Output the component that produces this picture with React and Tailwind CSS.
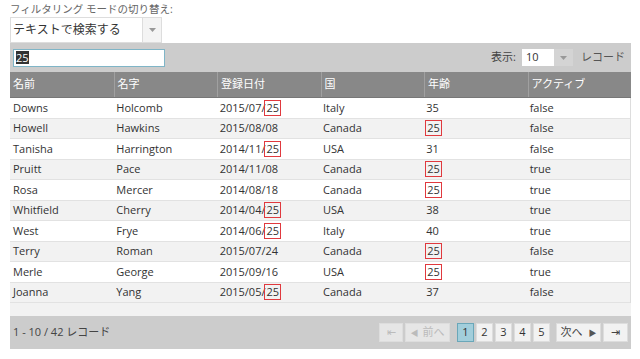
import React from 'react';

const rows = [
  { first: 'Downs', last: 'Holcomb', date: ['2015/07/', '25'], country: 'Italy', age: '35', active: 'false' },
  { first: 'Howell', last: 'Hawkins', date: ['2015/08/08'], country: 'Canada', age: '25', ageHit: true, active: 'false' },
  { first: 'Tanisha', last: 'Harrington', date: ['2014/11/', '25'], country: 'USA', age: '31', active: 'false' },
  { first: 'Pruitt', last: 'Pace', date: ['2014/11/08'], country: 'Canada', age: '25', ageHit: true, active: 'true' },
  { first: 'Rosa', last: 'Mercer', date: ['2014/08/18'], country: 'Canada', age: '25', ageHit: true, active: 'true' },
  { first: 'Whitfield', last: 'Cherry', date: ['2014/04/', '25'], country: 'USA', age: '38', active: 'true' },
  { first: 'West', last: 'Frye', date: ['2014/06/', '25'], country: 'Italy', age: '40', active: 'true' },
  { first: 'Terry', last: 'Roman', date: ['2015/07/24'], country: 'Canada', age: '25', ageHit: true, active: 'false' },
  { first: 'Merle', last: 'George', date: ['2015/09/16'], country: 'USA', age: '25', ageHit: true, active: 'true' },
  { first: 'Joanna', last: 'Yang', date: ['2015/05/', '25'], country: 'Canada', age: '37', active: 'false' },
];

const headers = ['名前', '名字', '登録日付', '国', '年齢', 'アクティブ'];

const Hit = ({ children }) => (
  <span className="border border-[#e0393e] leading-[14px] inline-block px-[1px] -mx-[1px]">{children}</span>
);

const Caret = () => (
  <svg width="7" height="4" viewBox="0 0 7 4"><path d="M0 0h7L3.5 4z" fill="#999" /></svg>
);

export default function App() {
  return (
    <div className="w-[640px] h-[359px] bg-white text-[11px] text-[#333] overflow-hidden" style={{ fontFamily: '"Open Sans", "Noto Sans CJK JP", sans-serif' }}>
      <div className="px-[10px] pt-[3px]">
        <div className="text-[10.5px] text-[#666] leading-[13px] h-[14px]">フィルタリング モードの切り替え:</div>
        <div className="flex w-[152px] h-[26px] border border-[#ddd] bg-white">
          <div className="flex-1 flex items-center pl-[2px] text-[12px] text-[#333]">テキストで検索する</div>
          <div className="w-[19px] border-l border-[#ddd] bg-[#f4f4f4] flex items-center justify-center"><Caret /></div>
        </div>

        <div className="w-[621px]">
          <div className="h-[29px] bg-[#cccccc] flex items-center justify-between pl-[3px] pr-[6px]">
            <div className="w-[152px] h-[18px] bg-white border border-[#7fb5c7] flex items-center px-[2px]">
              <span className="bg-[#333] text-white text-[11px] leading-[13px]">25</span>
            </div>
            <div className="flex items-center gap-[5px]">
              <span className="text-[#444]">表示:</span>
              <div className="flex h-[19px] w-[53px] border border-[#ccc]">
                <div className="flex-1 bg-white flex items-center pl-[4px] text-[11px]">10</div>
                <div className="w-[19px] bg-[#d4d4d4] flex items-center justify-center"><Caret /></div>
              </div>
              <span className="text-[11px] text-[#555] ml-[2px]">レコード</span>
            </div>
          </div>

          <div className="grid grid-cols-6 h-[26px] bg-[#888888] text-white border-b border-[#777]">
            {headers.map((h, i) => (
              <div key={h} className={`flex items-center pl-[3px] ${i > 0 ? 'border-l border-[#a0a0a0]' : ''}`}>{h}</div>
            ))}
          </div>

          <div className="border-r border-[#ddd]">
            {rows.map((r, i) => (
              <div key={r.first} className={`grid grid-cols-6 h-[20.5px] items-center border-b border-[#e2e2e2] ${i % 2 ? 'bg-[#f2f2f2]' : 'bg-white'}`}>
                <div className="pl-[3px]">{r.first}</div>
                <div className="pl-[3px]">{r.last}</div>
                <div className="pl-[3px]">{r.date[0]}{r.date[1] && <Hit>{r.date[1]}</Hit>}</div>
                <div className="pl-[3px]">{r.country}</div>
                <div className="pl-[3px]">{r.ageHit ? <Hit>{r.age}</Hit> : r.age}</div>
                <div className="pl-[3px]">{r.active}</div>
              </div>
            ))}
          </div>

          <div className="h-[13px] bg-[#f2f2f2]" />

          <div className="h-[33px] bg-[#cccccc] flex items-center justify-between pl-[3px] pr-[3px]">
            <span className="text-[#444]">1 - 10 / 42 レコード</span>
            <div className="flex items-center h-[19px] text-[11px]">
              <div className="w-[24px] h-full bg-[#e6e6e6] border border-[#ddd] flex items-center justify-center text-[#bbb]">⇤</div>
              <div className="w-[45px] h-full ml-[2px] bg-[#e6e6e6] border border-[#ddd] flex items-center justify-center gap-[4px] text-[#bbb]">
                <span className="text-[8px]">◀</span><span>前へ</span>
              </div>
              <div className="w-[17px] h-full ml-[7px] bg-[#a2cedb] border border-[#6aa7b9] flex items-center justify-center text-[#333]">1</div>
              {['2', '3', '4', '5'].map(n => (
                <div key={n} className="w-[17px] h-full ml-[2px] bg-[#f2f2f2] border border-[#ddd] flex items-center justify-center text-[#333]">{n}</div>
              ))}
              <div className="w-[45px] h-full ml-[6px] bg-[#f2f2f2] border border-[#ddd] flex items-center justify-center gap-[6px] text-[#444]">
                <span>次へ</span><span className="text-[8px] text-[#555]">▶</span>
              </div>
              <div className="w-[25px] h-full ml-[2px] bg-[#f2f2f2] border border-[#ddd] flex items-center justify-center text-[#444]">⇥</div>
            </div>
          </div>
        </div>
      </div>
    </div>
  );
}
